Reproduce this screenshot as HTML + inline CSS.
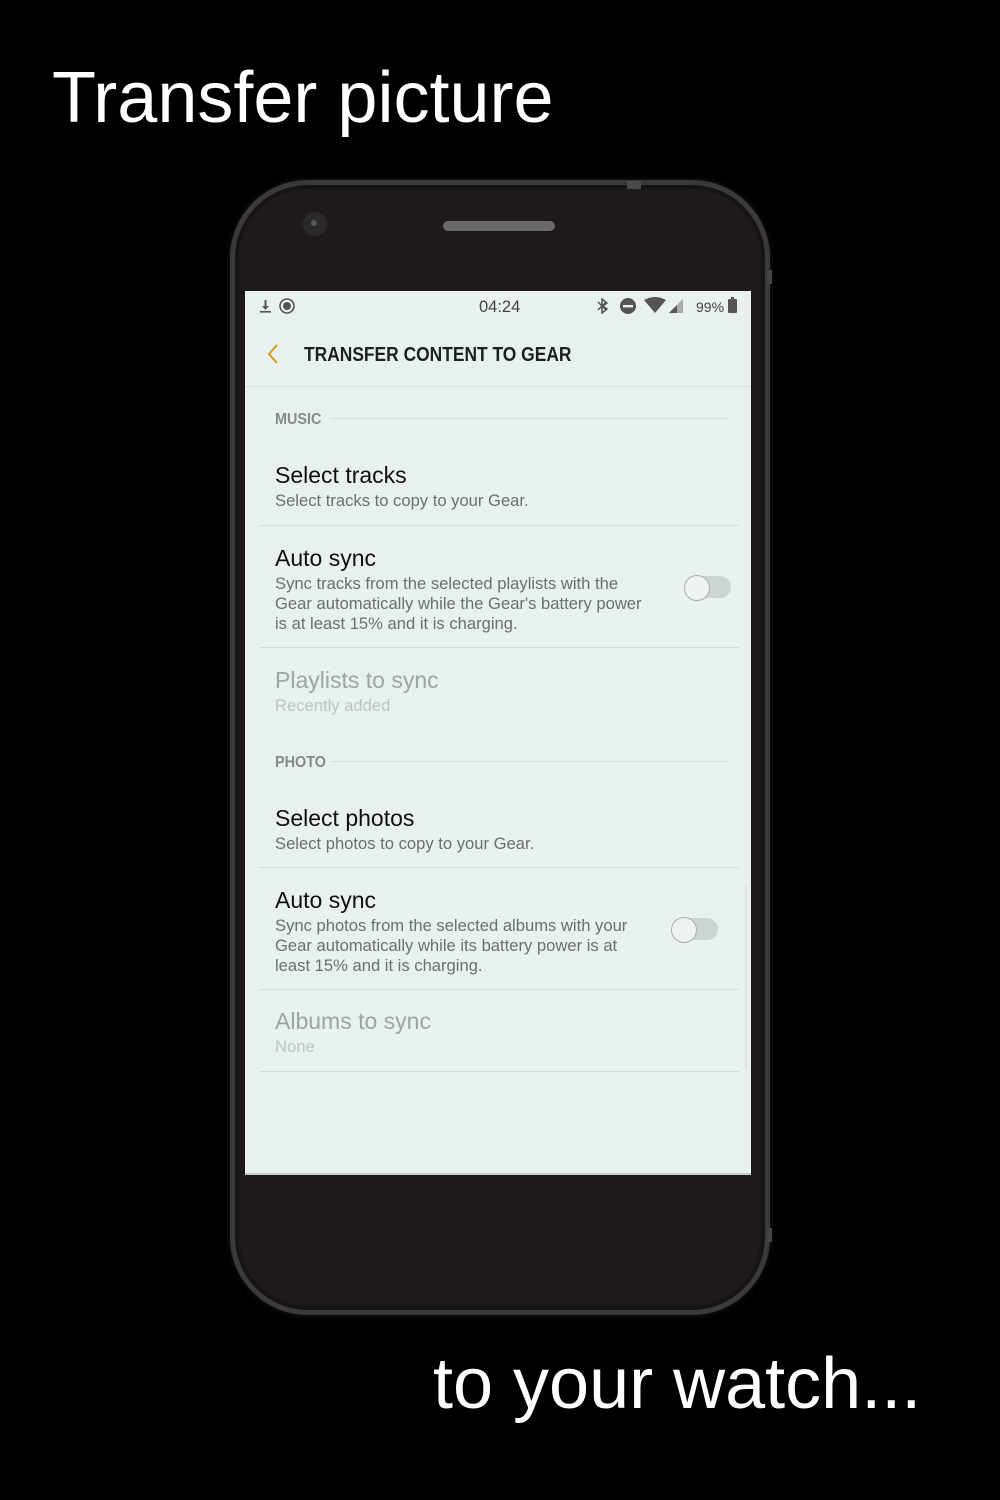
<!DOCTYPE html>
<html><head><meta charset="utf-8">
<style>
*{margin:0;padding:0;box-sizing:border-box}
body{width:1000px;height:1500px;background:#000;position:relative;overflow:hidden;font-family:"Liberation Sans",sans-serif}
.a{position:absolute;white-space:nowrap;line-height:1}
.cap{color:#fff;font-size:72px}
.phone{position:absolute;left:230px;top:180px;width:540px;height:1135px;border-radius:78px;background:#3a3a3a;box-shadow:0 0 6px rgba(60,60,60,.5)}
.phone .in1{position:absolute;left:5px;top:5px;right:5px;bottom:5px;border-radius:73px;background:#151515}
.phone .in2{position:absolute;left:9px;top:9px;right:9px;bottom:9px;border-radius:69px;background:#1e1a19}
.screen{position:absolute;left:245px;top:291px;width:506px;height:884px;background:#e8f1ef;border-bottom:2px solid #b9d4cf}
.t{color:#111;font-size:23px}
.s{color:#6a706f;font-size:16.6px}
.d{color:#9ea6a4;font-size:23px}
.ds{color:#bcc5c3;font-size:16.6px}
.h{color:#858b8a;font-size:16px;font-weight:bold;transform:scaleX(0.9);transform-origin:left}
.ln{position:absolute;height:1px;background:#d3dedb}
.tg{position:absolute;width:46px;height:22px;border-radius:11px;background:#cdd5d3}
.tg i{position:absolute;left:-1px;top:-1px;width:26px;height:26px;border-radius:50%;background:#eef3f2;border:1px solid #a9b1af}
</style></head><body>
<div class="a cap" style="left:52px;top:62px">Transfer picture</div>
<div class="a cap" style="left:433px;top:1348px">to your watch...</div>

<div class="phone"><div class="in1"></div><div class="in2"></div></div>
<div style="position:absolute;left:627px;top:181px;width:14px;height:8px;background:#4a4a4a"></div>
<div style="position:absolute;left:767px;top:270px;width:5px;height:14px;background:#444"></div>
<div style="position:absolute;left:767px;top:1228px;width:5px;height:14px;background:#444"></div>
<div style="position:absolute;left:304px;top:213px;width:22px;height:22px;border-radius:50%;background:#2a2a2c;box-shadow:0 0 3px #444"></div>
<div style="position:absolute;left:311px;top:220px;width:6px;height:6px;border-radius:50%;background:#555"></div>
<div style="position:absolute;left:443px;top:221px;width:112px;height:10px;border-radius:5px;background:#6a6868"></div>

<div class="screen"></div>
<svg class="a" style="left:258px;top:296px" width="480" height="22" viewBox="0 0 480 22">
 <g fill="#555">
  <rect x="2" y="15" width="11" height="1.6"/>
  <path d="M6.5 4h2v6h2.5l-3.5 4-3.5-4h2.5z"/>
  <circle cx="29" cy="10" r="7" fill="none" stroke="#555" stroke-width="1.6"/>
  <circle cx="29" cy="10" r="4"/>
  <path d="M344 3l5 4-4 3 4 3-5 4V3zM340 6l8 8M340 14l8-8" fill="none" stroke="#555" stroke-width="1.5"/>
  <circle cx="370" cy="10" r="8"/>
  <rect x="365" y="9" width="10" height="2.4" fill="#e8f1ef"/>
  <path d="M386 4q11-6 22 0l-11 13z"/>
  <path d="M411 17l14-14v14z" fill="#aaa"/>
  <path d="M411 17l8-8v8z"/>
  <rect x="470" y="3" width="9" height="14" rx="1"/>
  <rect x="473" y="1" width="3" height="3"/>
 </g>
</svg>
<div class="a" style="left:479px;top:299px;font-size:16.5px;color:#444">04:24</div>
<div class="a" style="left:696px;top:300px;font-size:14px;color:#444">99%</div>

<svg class="a" style="left:266px;top:343px" width="14" height="22"><path d="M11 2L3 11l8 9" fill="none" stroke="#d79a1c" stroke-width="2"/></svg>
<div class="a" style="left:304px;top:345px;font-size:20px;font-weight:bold;color:#1c2221;transform:scaleX(0.87);transform-origin:left">TRANSFER CONTENT TO GEAR</div>
<div class="ln" style="left:245px;top:386px;width:506px;background:#d6e1de"></div>

<div class="a h" style="left:275px;top:412px">MUSIC</div>
<div class="ln" style="left:330px;top:418px;width:398px"></div>
<div class="a t" style="left:275px;top:464px">Select tracks</div>
<div class="a s" style="left:275px;top:493px">Select tracks to copy to your Gear.</div>
<div class="ln" style="left:259px;top:525px;width:480px"></div>
<div class="a t" style="left:275px;top:547px">Auto sync</div>
<div class="a s" style="left:275px;top:574px;line-height:20px">Sync tracks from the selected playlists with the<br>Gear automatically while the Gear's battery power<br>is at least 15% and it is charging.</div>
<div class="tg" style="left:685px;top:576px"><i></i></div>
<div class="ln" style="left:259px;top:647px;width:480px"></div>
<div class="a d" style="left:275px;top:669px">Playlists to sync</div>
<div class="a ds" style="left:275px;top:698px">Recently added</div>

<div class="a h" style="left:275px;top:755px">PHOTO</div>
<div class="ln" style="left:332px;top:761px;width:396px"></div>
<div class="a t" style="left:275px;top:807px">Select photos</div>
<div class="a s" style="left:275px;top:836px">Select photos to copy to your Gear.</div>
<div class="ln" style="left:259px;top:867px;width:480px"></div>
<div class="a t" style="left:275px;top:889px">Auto sync</div>
<div class="a s" style="left:275px;top:916px;line-height:20px">Sync photos from the selected albums with your<br>Gear automatically while its battery power is at<br>least 15% and it is charging.</div>
<div class="tg" style="left:672px;top:918px"><i></i></div>
<div class="ln" style="left:259px;top:989px;width:480px"></div>
<div class="a d" style="left:275px;top:1010px">Albums to sync</div>
<div class="a ds" style="left:275px;top:1039px">None</div>
<div class="ln" style="left:259px;top:1071px;width:480px"></div>
<div style="position:absolute;left:745px;top:885px;width:2px;height:185px;background:#dbe5e2"></div>
</body></html>
